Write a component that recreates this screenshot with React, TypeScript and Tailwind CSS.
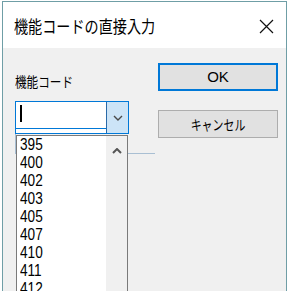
const codes = ["395", "400", "402", "403", "405", "407", "410", "411", "412"];

export default function App() {
  return (
    <div className="h-[291px] w-[290px] overflow-hidden bg-white pl-[2px] pt-[1px] font-['Liberation_Sans',sans-serif] text-black">
      <div className="flex h-[290px] w-[285px] flex-col border-x border-t border-[#6f9ea6]">
        {/* title bar */}
        <div className="flex h-[46px] shrink-0 items-center justify-between bg-white pl-[11px] pr-[12px] pt-[2px]">
          <span className="inline-block origin-left scale-x-[0.83] whitespace-nowrap font-['Noto_Sans_CJK_JP',sans-serif] text-[17px] leading-[20px]">
            機能コードの直接入力
          </span>
          <svg width="15" height="15" viewBox="0 0 15 15" className="shrink-0">
            <path d="M1 1 L14 14 M14 1 L1 14" stroke="#111" strokeWidth="1.2" fill="none" />
          </svg>
        </div>

        {/* body */}
        <div className="relative flex flex-1 items-start bg-[#f0f0f0] pl-[12px]">
          <div className="absolute left-[12px] top-[53px] h-[53px] w-[140px] border-b border-l border-[#a9bfd3]" />

          <div className="relative flex w-[114px] flex-col">
            <div className="mt-[25px] h-[16px] whitespace-nowrap font-['Noto_Sans_CJK_JP',sans-serif] text-[14px] leading-[16px]">
              <span className="inline-block origin-left scale-x-[0.83]">機能コード</span>
            </div>

            {/* combobox */}
            <div className="mt-[12px] flex h-[33px] border border-[#0078d7] bg-white">
              <div className="flex flex-1 flex-col pt-[3px]">
                <div className="ml-[4px] h-[17px] w-[2px] bg-black" />
                <div className="mt-[6px] h-px bg-[#0078d7]" />
              </div>
              <div className="flex w-[22px] items-center justify-center border-l border-[#2a6aa8] bg-[#cce4f7]">
                <svg width="10" height="6" viewBox="0 0 10 6">
                  <path d="M1 1 L5 5 L9 1" stroke="#4a4a4a" strokeWidth="1.4" fill="none" />
                </svg>
              </div>
            </div>

            {/* dropdown list */}
            <div className="ml-[1px] mt-[1px] flex h-[200px] w-[112px] border border-[#7a7a7a] bg-white">
              <div className="flex-1 pl-[3px]">
                {codes.map((code) => (
                  <div key={code} className="h-[18px] text-[16px] leading-[18px]">
                    <span className="inline-block origin-left scale-x-[0.85]">{code}</span>
                  </div>
                ))}
              </div>
              <div className="flex w-[21px] justify-center bg-[#f0f0f0] pt-[12px]">
                <svg width="10" height="6" viewBox="0 0 10 6">
                  <path d="M1 5 L5 1 L9 5" stroke="#555" strokeWidth="2" fill="none" />
                </svg>
              </div>
            </div>
          </div>

          {/* buttons */}
          <div className="relative ml-[29px] flex w-[120px] flex-col pt-[15px]">
            <button className="flex h-[28px] items-center justify-center border-2 border-[#0078d7] bg-[#e1e1e1] text-[15px] leading-[18px]">
              OK
            </button>
            <button className="mt-[19px] flex h-[28px] items-center justify-center border border-[#adadad] bg-[#e1e1e1] font-['Noto_Sans_CJK_JP',sans-serif] text-[14px] leading-[18px]">
              <span className="inline-block scale-x-[0.78]">キャンセル</span>
            </button>
          </div>
        </div>
      </div>
    </div>
  );
}
